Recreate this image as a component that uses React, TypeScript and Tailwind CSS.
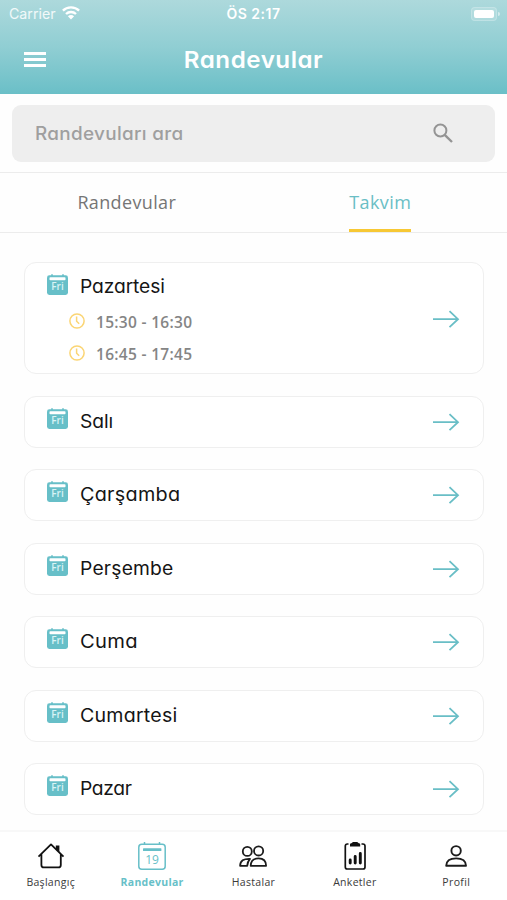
import React from "react";

const round = "font-['Inter',sans-serif] [font-feature-settings:'cv11'_1]";
const open = "font-['Open_Sans',sans-serif]";

function DayIcon() {
  return (
    <svg width="21" height="22" viewBox="0 0 21 22" className="block shrink-0">
      <rect x="0" y="1.3" width="21" height="19.6" rx="2.4" fill="#67bfc8" />
      <path d="M5 0.2v3M16 0.2v3" stroke="#67bfc8" strokeWidth="1.6" />
      <rect x="2.5" y="3.3" width="16" height="3" rx="0.8" fill="#fff" />
      <text x="10.5" y="16.2" textAnchor="middle" fontSize="10" fontFamily="Open Sans, sans-serif" fontWeight="600" fill="#d9f3f5">Fri</text>
    </svg>
  );
}

function Arrow() {
  return (
    <svg width="28" height="18" viewBox="0 0 28 18" fill="none" stroke="#69bec6" strokeWidth="1.8" className="block shrink-0">
      <path d="M1 9.2H26M17.5 1.2L26 9.2L17.5 17.2" />
    </svg>
  );
}

function Clock() {
  return (
    <svg width="16" height="16" viewBox="0 0 16 16" fill="none" stroke="#fbd574" strokeWidth="1.5" className="block shrink-0">
      <circle cx="8" cy="8" r="7.1" />
      <path d="M7.6 3.6V8.2L10.2 10.8" />
    </svg>
  );
}

function Title({ text, spacing }: { text: string; spacing: string }) {
  return (
    <div className="flex items-start">
      <DayIcon />
      <span className={`${round} ml-3 mt-px inline-block origin-left text-[18.5px] leading-6 text-[#151515] ${spacing}`}>{text}</span>
    </div>
  );
}

const days = [
  { name: "Salı", spacing: "scale-x-[1.04] tracking-[-0.1px]" },
  { name: "Çarşamba", spacing: "scale-x-[1.07] tracking-[0.25px]" },
  { name: "Perşembe", spacing: "scale-x-[1.04] tracking-[0.2px]" },
  { name: "Cuma", spacing: "scale-x-[1.09] tracking-[0.3px]" },
  { name: "Cumartesi", spacing: "scale-x-[1.06] tracking-[0.2px]" },
  { name: "Pazar", spacing: "scale-x-[1.04] tracking-[-0.3px]" },
];

function HomeIcon() {
  return (
    <svg width="28" height="28" viewBox="0 0 28 28" fill="none" stroke="#111" strokeWidth="1.8" strokeLinejoin="round">
      <path d="M1.5 14.6L14 2.4L26.5 14.6M4.4 12V22.9Q4.4 25.4 6.9 25.4H21.3Q23.8 25.4 23.8 22.9V12" />
      <path d="M18.8 3.6H22.4V10.4L18.8 6.9Z" fill="#111" stroke="none" />
    </svg>
  );
}

function CalendarIcon() {
  return (
    <svg width="28" height="28" viewBox="0 0 28 28" fill="none" stroke="#67bfc8" strokeWidth="1.5">
      <rect x="0.8" y="2.2" width="26.4" height="25" rx="3" />
      <path d="M6.5 0V2.5M21.5 0V2.5" />
      <rect x="5" y="6.2" width="18.4" height="2.8" rx="0.6" fill="#67bfc8" stroke="none" />
      <text x="14" y="21.8" textAnchor="middle" fontSize="12" fontFamily="Open Sans, sans-serif" fill="#67bfc8" stroke="none">19</text>
    </svg>
  );
}

function PeopleIcon() {
  return (
    <svg width="28" height="28" viewBox="0 0 28 28" fill="none" stroke="#1c1c1c" strokeWidth="1.8" strokeLinejoin="round">
      <circle cx="8.3" cy="9.4" r="4.5" />
      <circle cx="19.6" cy="8.9" r="4.6" />
      <path d="M11.7 23.8Q12 16.4 19.6 16.4Q27 16.4 27.1 23.8ZM11 16.8Q1.3 16.4 1.1 23.8H8.2Q8.6 19.4 11 16.8Z" />
    </svg>
  );
}

function ChartIcon() {
  return (
    <svg width="28" height="28" viewBox="0 0 28 28" fill="none" stroke="#111" strokeWidth="1.7">
      <path d="M7.5 2H6.4Q4.3 2 4.3 4.1V24.9Q4.3 27 6.4 27H21.9Q24 27 24 24.9V4.1Q24 2 21.9 2H20.5" />
      <path d="M9 4.4V2.2Q9 1.2 10.4 1.2L12 0H16.2L17.8 1.2Q19.2 1.2 19.2 2.2V4.4Z" fill="#111" stroke="none" />
      <path d="M9.2 17.9V21.1M14.2 14.5V21.1M19.3 11.4V21.1" strokeWidth="2.9" strokeLinecap="round" />
    </svg>
  );
}

function ProfileIcon() {
  return (
    <svg width="28" height="28" viewBox="0 0 28 28" fill="none" stroke="#1c1c1c" strokeWidth="1.9" strokeLinejoin="round">
      <circle cx="14.1" cy="8.8" r="4.7" />
      <path d="M4.2 23.7Q4.5 16.4 14.1 16.4Q23.7 16.4 24 23.7Z" />
    </svg>
  );
}

const nav = [
  { label: "Başlangıç", icon: <HomeIcon />, cls: "text-[#3a3a3a] font-medium tracking-[0.3px]" },
  { label: "Randevular", icon: <CalendarIcon />, cls: "text-[#67bfc8] font-bold tracking-[0.28px]" },
  { label: "Hastalar", icon: <PeopleIcon />, cls: "text-[#3a3a3a] font-medium tracking-[0.3px]" },
  { label: "Anketler", icon: <ChartIcon />, cls: "text-[#3a3a3a] font-medium tracking-[0.3px]" },
  { label: "Profil", icon: <ProfileIcon />, cls: "text-[#3a3a3a] font-medium tracking-[0.35px]" },
];

export default function App() {
  return (
    <div className="flex h-[900px] w-[507px] flex-col overflow-hidden bg-[#fefefe]">
      <header className="h-[93.5px] shrink-0 bg-linear-to-b from-[#add9dc] via-[#90ced3] to-[#6abfc7]">
        <div className="grid h-[27px] grid-cols-3 items-center pl-[9px] pr-[7px] font-['Inter',sans-serif] text-white">
          <div className="flex items-center gap-[6px] text-[14.2px] text-white/85">
            <span>Carrier</span>
            <svg width="18" height="14" viewBox="0 0 18 14" fill="none" stroke="#fff" strokeWidth="2.3">
              <path d="M0.9 4.6C5.2 0.2 12.8 0.2 17.1 4.6M4 8C6.8 5.3 11.2 5.3 14 8" />
              <path d="M9 13.4L5.9 10.2Q9 7.8 12.1 10.2Z" fill="#fff" stroke="none" />
            </svg>
          </div>
          <div className="pr-[2px] text-center text-[14px] font-semibold tracking-[0.5px]">ÖS 2:17</div>
          <div className="flex items-center justify-end gap-px">
            <div className="h-[14px] w-[26px] rounded-[4px] border border-white/20 bg-white/15 p-[2px]">
              <div className="h-full rounded-[2px] bg-white" />
            </div>
            <div className="h-1 w-[2px] rounded-r bg-white/50" />
          </div>
        </div>
        <div className="grid h-[65px] grid-cols-[80px_1fr_80px] items-center">
          <div className="ml-6 flex w-[22px] flex-col gap-[3px]">
            <div className="h-[3px] bg-white" />
            <div className="h-[3px] bg-white" />
            <div className="h-[3px] bg-white" />
          </div>
          <h1 className={`${round} scale-x-[1.05] pt-[2px] text-center text-[23px] font-semibold tracking-[0.5px] text-white`}>Randevular</h1>
        </div>
      </header>

      <div className="mx-3 mt-[11px] flex h-[57.5px] shrink-0 items-center justify-between rounded-[9px] bg-[#eee] pl-[23px] pr-[42px]">
        <span className={`${round} origin-left scale-x-[1.05] text-[18px] font-medium tracking-[0.3px] text-[#9f9f9f]`}>Randevuları ara</span>
        <svg width="21" height="21" viewBox="0 0 21 21" fill="none" stroke="#949494" strokeWidth="2">
          <circle cx="8.4" cy="7.5" r="6" />
          <path d="M12.7 11.8L20 19" strokeWidth="2.4" />
        </svg>
      </div>

      <div className={`mt-[10px] flex h-[61px] shrink-0 border-y border-[#ececec] text-[18px] ${open}`}>
        <div className="flex w-1/2 items-center justify-center text-[#757575]">
          <span className="tracking-[0.35px]">Randevular</span>
        </div>
        <div className="flex w-1/2 justify-center text-[#6abec5]">
          <span className="flex items-center border-b-[3px] border-[#f7c834] pt-[3px] tracking-[0.4px]">Takvim</span>
        </div>
      </div>

      <main className="flex flex-1 flex-col pl-6 pr-[23px] pt-[29px]">
        <section className="flex h-[112px] items-center justify-between rounded-[12px] border border-[#efefef] bg-white pl-[22px] pr-[23px]">
          <div className="h-full pt-[11px]">
            <Title text="Pazartesi" spacing="scale-x-[1.04] tracking-[-0.1px] -translate-y-px" />
            <div className={`ml-[22px] mt-2 text-[15.5px] font-semibold tracking-[0.3px] text-[#858585] ${open}`}>
              {["15:30 - 16:30", "16:45 - 17:45"].map((t) => (
                <div key={t} className="flex h-[31.5px] items-center gap-[11px]">
                  <div className="pb-[3px]">
                    <Clock />
                  </div>
                  <span>{t}</span>
                </div>
              ))}
            </div>
          </div>
          <div className="pt-px">
            <Arrow />
          </div>
        </section>
        {days.map((d) => (
          <section key={d.name} className="mt-[21.5px] flex h-[52px] shrink-0 items-center justify-between rounded-[12px] border border-[#efefef] bg-white pl-[22px] pr-[23px]">
            <div className="h-full pt-[11px]">
              <Title text={d.name} spacing={d.spacing} />
            </div>
            <Arrow />
          </section>
        ))}
      </main>

      <nav className={`grid h-[70px] shrink-0 grid-cols-5 border-t-2 border-[#f8f8f8] bg-white pt-[10px] text-[10.5px] ${open}`}>
        {nav.map((n) => (
          <div key={n.label} className="flex flex-col items-center gap-1">
            {n.icon}
            <span className={`leading-4 ${n.cls}`}>{n.label}</span>
          </div>
        ))}
      </nav>
    </div>
  );
}
